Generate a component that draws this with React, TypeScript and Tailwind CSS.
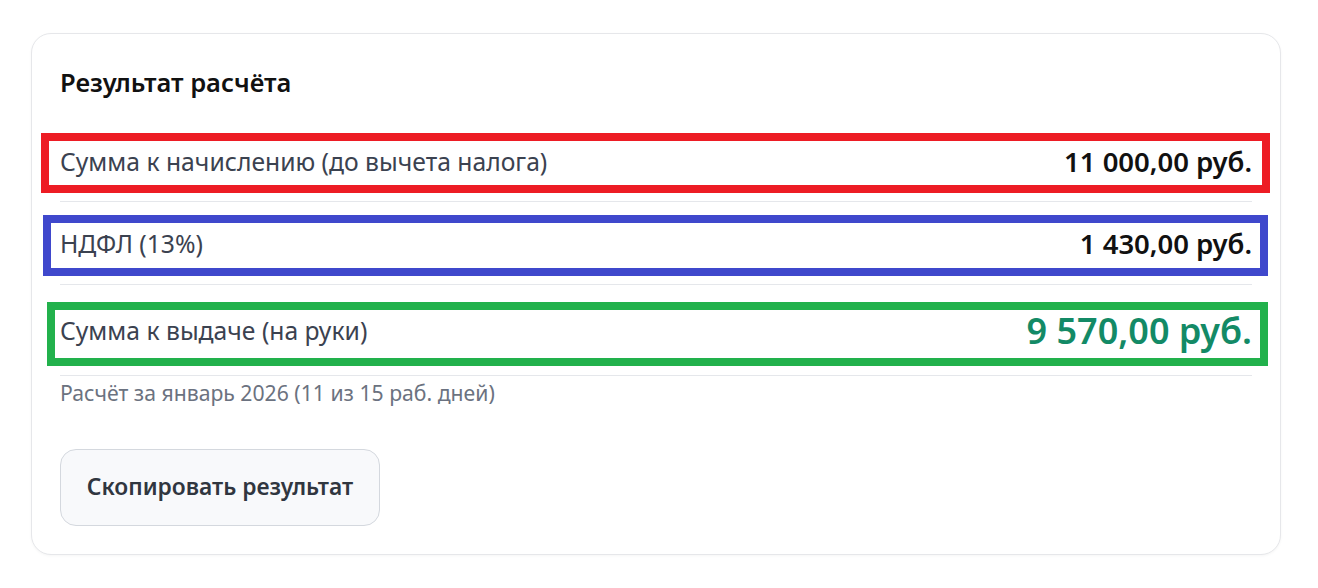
import React from "react";

type Row = {
  label: string;
  value: string;
  height: string;
  big?: boolean;
  mark: string;
};

const ROWS: Row[] = [
  {
    label: "Сумма к начислению (до вычета налога)",
    value: "11 000,00 руб.",
    height: "h-[81px] pt-[1px]",
    mark: "border-[#ed1c24] -left-[19px] -right-[18px] top-[12px] bottom-[8px]",
  },
  {
    label: "НДФЛ (13%)",
    value: "1 430,00 руб.",
    height: "h-[83px] pt-[2px]",
    mark: "border-[#3f48cc] -left-[17px] -right-[16px] top-[13px] bottom-[8px]",
  },
  {
    label: "Сумма к выдаче (на руки)",
    value: "9 570,00 руб.",
    height: "h-[91px] pt-[2px]",
    big: true,
    mark: "border-[#22b14c] -left-[13px] -right-[16px] top-[17px] bottom-[9px]",
  },
];

export default function App() {
  return (
    <div
      className="min-h-screen bg-white pt-[33px] pl-[31px] pr-[37px]"
      style={{ fontFamily: '"Noto Sans", "Open Sans", sans-serif' }}
    >
      <div className="rounded-[20px] border border-[#e6e7ea] bg-white px-[28px] pt-[30px] pb-[28px] shadow-[0_1px_3px_rgba(0,0,0,0.04)]">
        <h2 className="text-[25.5px] font-semibold leading-[36px] text-[#111]">
          Результат расчёта
        </h2>

        <div className="mt-[21px]">
          {ROWS.map((row) => (
            <div
              key={row.label}
              className={`relative flex items-center justify-between border-b border-[#e5e7eb] ${row.height}`}
            >
              {/* annotation frame */}
              <div
                className={`pointer-events-none absolute border-[8px] ${row.mark}`}
              />
              <span className="text-[24.7px] leading-[32px] text-[#3b4250]">
                {row.label}
              </span>
              <span
                className={
                  row.big
                    ? "text-[36px] font-semibold leading-[46px] text-[#138a66]"
                    : "text-[27.5px] font-semibold leading-[34px] text-[#111]"
                }
              >
                {row.value}
              </span>
            </div>
          ))}
        </div>

        <p className="mt-[2px] text-[21.2px] leading-[30px] text-[#6b7280]">
          Расчёт за январь 2026 (11 из 15 раб. дней)
        </p>

        <button className="mt-[41px] h-[77px] w-[320px] rounded-[16px] border border-[#d4d8de] bg-[#f8f9fb] text-[22.8px] font-semibold text-[#30363f]">
          Скопировать результат
        </button>
      </div>
    </div>
  );
}
